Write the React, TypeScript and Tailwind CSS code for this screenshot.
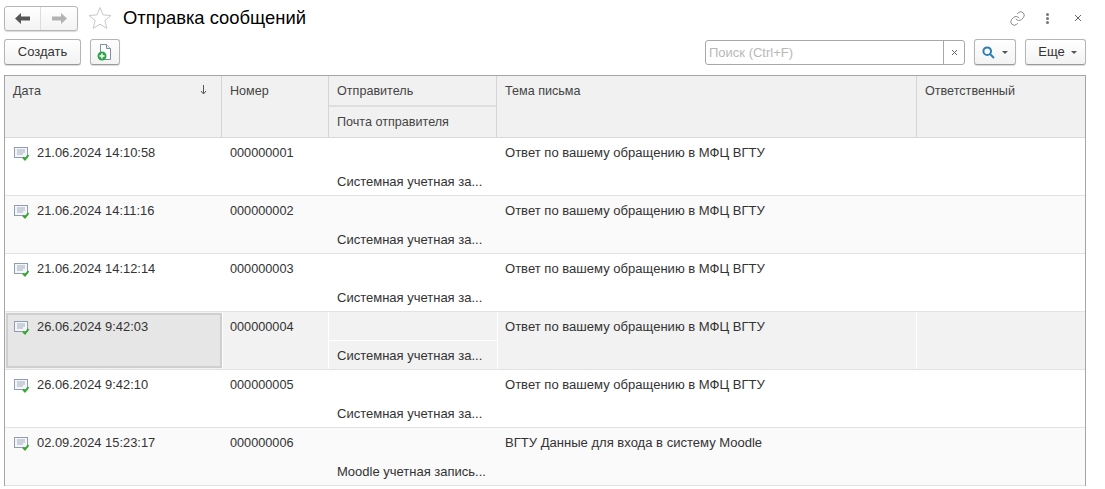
import React from 'react';
import type { FC, ReactNode } from 'react';

const COLS = 'grid grid-cols-[217px_107px_168px_420px_1fr]';

interface Row {
  date: string;
  num: string;
  sender: string;
  subject: string;
}

const ROWS: Row[] = [
  { date: '21.06.2024 14:10:58', num: '000000001', sender: 'Системная учетная за...', subject: 'Ответ по вашему обращению в МФЦ ВГТУ' },
  { date: '21.06.2024 14:11:16', num: '000000002', sender: 'Системная учетная за...', subject: 'Ответ по вашему обращению в МФЦ ВГТУ' },
  { date: '21.06.2024 14:12:14', num: '000000003', sender: 'Системная учетная за...', subject: 'Ответ по вашему обращению в МФЦ ВГТУ' },
  { date: '26.06.2024 9:42:03', num: '000000004', sender: 'Системная учетная за...', subject: 'Ответ по вашему обращению в МФЦ ВГТУ' },
  { date: '26.06.2024 9:42:10', num: '000000005', sender: 'Системная учетная за...', subject: 'Ответ по вашему обращению в МФЦ ВГТУ' },
  { date: '02.09.2024 15:23:17', num: '000000006', sender: 'Moodle учетная запись...', subject: 'ВГТУ Данные для входа в систему Moodle' },
];

const Btn: FC<{ className: string; children: ReactNode }> = ({ className, children }) => (
  <div
    className={`flex h-[26px] items-center justify-center rounded-[3px] border border-[#b5b5b5] border-b-[#9a9a9a] bg-gradient-to-b from-white to-[#f3f3f3] shadow-[0_1px_1px_rgba(0,0,0,0.15)] ${className}`}
  >
    {children}
  </div>
);

const Caret = () => <span className="h-0 w-0 border-x-[3px] border-t-[3px] border-x-transparent border-t-[#555]" />;

const MailIcon = () => (
  <svg width="17" height="15" viewBox="0 0 17 15" className="mt-[1px] shrink-0">
    <rect x="0.5" y="1.5" width="13" height="10" fill="#f4f6f9" stroke="#8f9db0" />
    <path d="M3 4h8M3 6h8M3 8h6" stroke="#a3aebc" />
    <path d="M9 11.500l2 2 3.500-4.500" fill="none" stroke="#35a82f" strokeWidth="2" />
  </svg>
);

const RowView: FC<{ row: Row; index: number }> = ({ row, index }) => {
  const current = index === 3;
  const bg = current ? 'bg-[#f2f2f2]' : index % 2 === 1 ? 'bg-[#fafafa]' : 'bg-white';
  return (
    <div className={`${COLS} h-[58px] border-b border-[#e2e2e2] leading-[15px] text-[#333] ${bg}`}>
      <div
        className={
          current
            ? 'm-[1px] mr-0 flex items-start gap-[6px] border-[2px] border-[#cfcfcf] bg-[#e6e6e6] pt-[4px] pl-[6px]'
            : 'flex items-start gap-[6px] pt-[7px] pl-[9px]'
        }
      >
        <MailIcon />
        <span className="text-[12.9px]">{row.date}</span>
      </div>
      <div className={`text-[12.7px] ${current ? 'border-x border-white pt-[8px] pl-[7px]' : 'pt-[8px] pl-[8px]'}`}>
        {row.num}
      </div>
      <div className="flex flex-col">
        <div className={current ? 'h-[29px] border-b border-white' : 'h-[29px]'} />
        <div className="pt-[7px] pl-[8px]">{row.sender}</div>
      </div>
      <div className={`text-[13.05px] ${current ? 'border-x border-white pt-[7px] pl-[7px]' : 'pt-[7px] pl-[8px]'}`}>
        {row.subject}
      </div>
      <div />
    </div>
  );
};

export default function App() {
  return (
    <div className="flex h-[489px] w-[1105px] flex-col overflow-hidden bg-white font-['Liberation_Sans',Arial,sans-serif] text-[13px] text-[#333]">
      <div className="flex h-[35px] items-center pl-[4px] pr-[23px] pt-[1px]">
        <div className="flex h-[25px] w-[74px] rounded-[3px] border border-[#b5b5b5] bg-gradient-to-b from-white to-[#f3f3f3] shadow-[0_1px_1px_rgba(0,0,0,0.15)]">
          <div className="flex w-[36px] items-center justify-center border-r border-[#dcdcdc]">
            <svg width="15" height="11" viewBox="0 0 15 11">
              <path d="M0 5.500L6 0v3.500h9v4H6V11z" fill="#555" />
            </svg>
          </div>
          <div className="flex flex-1 items-center justify-center">
            <svg width="15" height="11" viewBox="0 0 15 11">
              <path d="M15 5.500L9 0v3.500H0v4h9V11z" fill="#b2b2b2" />
            </svg>
          </div>
        </div>
        <svg width="24" height="24" viewBox="0 0 24 24" className="ml-[10px]">
          <path d="M12 1.500l3 7.400 8 .6-6.100 5.100 1.900 7.800L12 18.200l-6.800 4.200 1.900-7.800L1 9.500l8-.6z" fill="none" stroke="#c9c9c9" />
        </svg>
        <div className="ml-[11px] text-[18.4px] leading-[22px] text-black">Отправка сообщений</div>
        <div className="ml-auto flex items-center">
          <svg width="17" height="17" viewBox="0 0 24 24" fill="none" stroke="#8a8a8a" strokeWidth="1.400" strokeLinecap="round">
            <path d="M10 13a5 5 0 0 0 7.500.5l3-3a5 5 0 0 0-7-7l-1.700 1.700" />
            <path d="M14 11a5 5 0 0 0-7.500-.5l-3 3a5 5 0 0 0 7 7l1.700-1.700" />
          </svg>
          <div className="ml-[20px] flex flex-col gap-[1px]">
            <span className="h-[3px] w-[3px] rounded-full bg-[#777]" />
            <span className="h-[3px] w-[3px] rounded-full bg-[#777]" />
            <span className="h-[3px] w-[3px] rounded-full bg-[#777]" />
          </div>
          <svg width="8" height="8" viewBox="0 0 8 8" className="ml-[25px]">
            <path d="M1 1l6 6M7 1L1 7" stroke="#666" />
          </svg>
        </div>
      </div>

      <div className="flex h-[40px] items-start pt-[4px] pl-[4px] pr-[19px]">
        <Btn className="w-[77px] text-[#333]">Создать</Btn>
        <Btn className="ml-[9px] w-[30px]">
          <svg width="16" height="18" viewBox="0 0 16 18">
            <path d="M3.500 1.500h6l4 4v11h-10z" fill="#fff" stroke="#7f8fa3" />
            <path d="M9.500 1.500v4h4" fill="#e6ebf1" stroke="#7f8fa3" />
            <circle cx="5" cy="13" r="4.500" fill="#2ea44a" />
            <path d="M5 10.500v5M2.500 13h5" stroke="#fff" strokeWidth="1.500" />
          </svg>
        </Btn>
        <div className="mt-[1px] ml-auto flex h-[25px] w-[260px] overflow-hidden rounded-[3px] border border-[#a8a8a8]">
          <div className="flex-1 pl-[3px] leading-[23px] text-[#b8b8b8]">Поиск (Ctrl+F)</div>
          <div className="flex w-[21px] items-center justify-center border-l border-[#a8a8a8]">
            <svg width="7" height="7" viewBox="0 0 7 7">
              <path d="M1 1l5 5M6 1L1 6" stroke="#666" />
            </svg>
          </div>
        </div>
        <Btn className="ml-[9px] w-[42px] gap-[7px]">
          <svg width="13" height="13" viewBox="0 0 13 13" fill="none" stroke="#2b7cb5" strokeWidth="2">
            <circle cx="5.200" cy="5.200" r="3.800" />
            <path d="M8 8l4 4" />
          </svg>
          <Caret />
        </Btn>
        <Btn className="ml-[9px] w-[61px] gap-[6px] pl-[4px] text-[#333]">
          Еще
          <Caret />
        </Btn>
      </div>

      <div className="mx-[4px] w-[1082px] border-x border-t border-[#a5a5a5]">
        <div className={`${COLS} h-[62px] border-b border-[#d9d9d9] bg-[#f1f1f1] text-[12.6px] leading-[15px] text-[#444]`}>
          <div className="flex justify-between border-r border-[#d5d5d5] pt-[8px] pr-[14px] pl-[8px]">
            <span>Дата</span>
            <svg width="7" height="10" viewBox="0 0 7 10" className="mt-[1px]">
              <path d="M3.500 0v8M1 6l2.500 3L6 6" fill="none" stroke="#555" />
            </svg>
          </div>
          <div className="border-r border-[#d5d5d5] pt-[8px] pl-[8px]">Номер</div>
          <div className="flex flex-col border-r border-[#d5d5d5]">
            <div className="h-[31px] border-b-2 border-[#dedede] pt-[8px] pl-[8px]">Отправитель</div>
            <div className="pt-[8px] pl-[8px]">Почта отправителя</div>
          </div>
          <div className="border-r border-[#d5d5d5] pt-[8px] pl-[8px]">Тема письма</div>
          <div className="pt-[8px] pl-[8px]">Ответственный</div>
        </div>
        {ROWS.map((row, i) => (
          <RowView key={row.num} row={row} index={i} />
        ))}
      </div>
    </div>
  );
}
